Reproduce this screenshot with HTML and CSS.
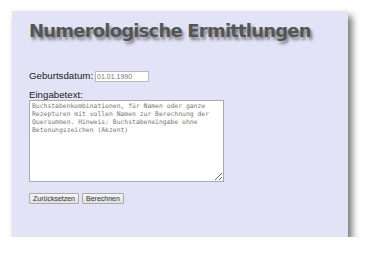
FILE: index.html
```html
<!DOCTYPE html>
<html lang="de">
<head>
<meta charset="utf-8">
<title>Numerologische Ermittlungen</title>
<link rel="stylesheet" href="styles.css">
</head>
<body>
<div class="panel">
  <h1 class="title">Numerologische Ermittlungen</h1>
  <div class="row">
    <label class="label">Geburtsdatum:</label>
    <input class="date" type="text" value="01.01.1990">
  </div>
  <div class="block">
    <label class="label">Eingabetext:</label>
    <textarea class="text" spellcheck="false">Buchstabenkombinationen, für Namen oder ganze Rezepturen mit vollen Namen zur Berechnung der Quersummen. Hinweis: Buchstabeneingabe ohne Betonungszeichen (Akzent)</textarea>
  </div>
  <div class="buttons">
    <button class="btn">Zurücksetzen</button>
    <button class="btn">Berechnen</button>
  </div>
</div>
</body>
</html>
```
FILE: styles.css
```css
html, body { margin: 0; padding: 0; background: #fff; }
body { font-family: "Liberation Sans", Arial, sans-serif; }
.panel {
  margin: 11px 0 0 12px;
  width: 336px;
  height: 226px;
  box-sizing: border-box;
  background: #e3e3f7;
  box-shadow: 4px 5px 7px rgba(0,0,0,0.55);
  padding: 8px 0 0 17px;
}
.title {
  margin: 0;
  font: bold 18px "DejaVu Sans", Verdana, sans-serif;
  color: #555;
  letter-spacing: -0.8px;
  white-space: nowrap;
  text-shadow: 2px 3px 3px rgba(0,0,0,0.45);
  line-height: 24px;
}
.row { margin-top: 27px; height: 12px; display: flex; align-items: center; gap: 2px; }
.label { font-size: 9.7px; line-height: 12px; color: #222; }
.date {
  width: 54px; height: 11px; box-sizing: border-box; margin: 0;
  border: 1px solid #bbb; padding: 0 1px; background: #fff;
  font: 7px "Liberation Sans", Arial, sans-serif; color: #777;
}
.block { margin-top: 7px; display: flex; flex-direction: column; }
.block .label { line-height: 11px; }
.text {
  width: 195px; height: 82px; box-sizing: border-box; margin: 0;
  border: 1px solid #aaa; padding: 1px 2px; background: #fff;
  font: 6.4px/8px "DejaVu Sans Mono", monospace; color: #777;
  resize: both;
}
.buttons { margin-top: 11px; display: flex; gap: 3px; }
.btn {
  height: 11px; box-sizing: border-box; padding: 0 3px; margin: 0;
  font: 7px "Liberation Sans", Arial, sans-serif; color: #333;
  background: linear-gradient(#f5f5f5, #e0e0e0);
  border: 1px solid #aaa; border-radius: 1px;
}
```
